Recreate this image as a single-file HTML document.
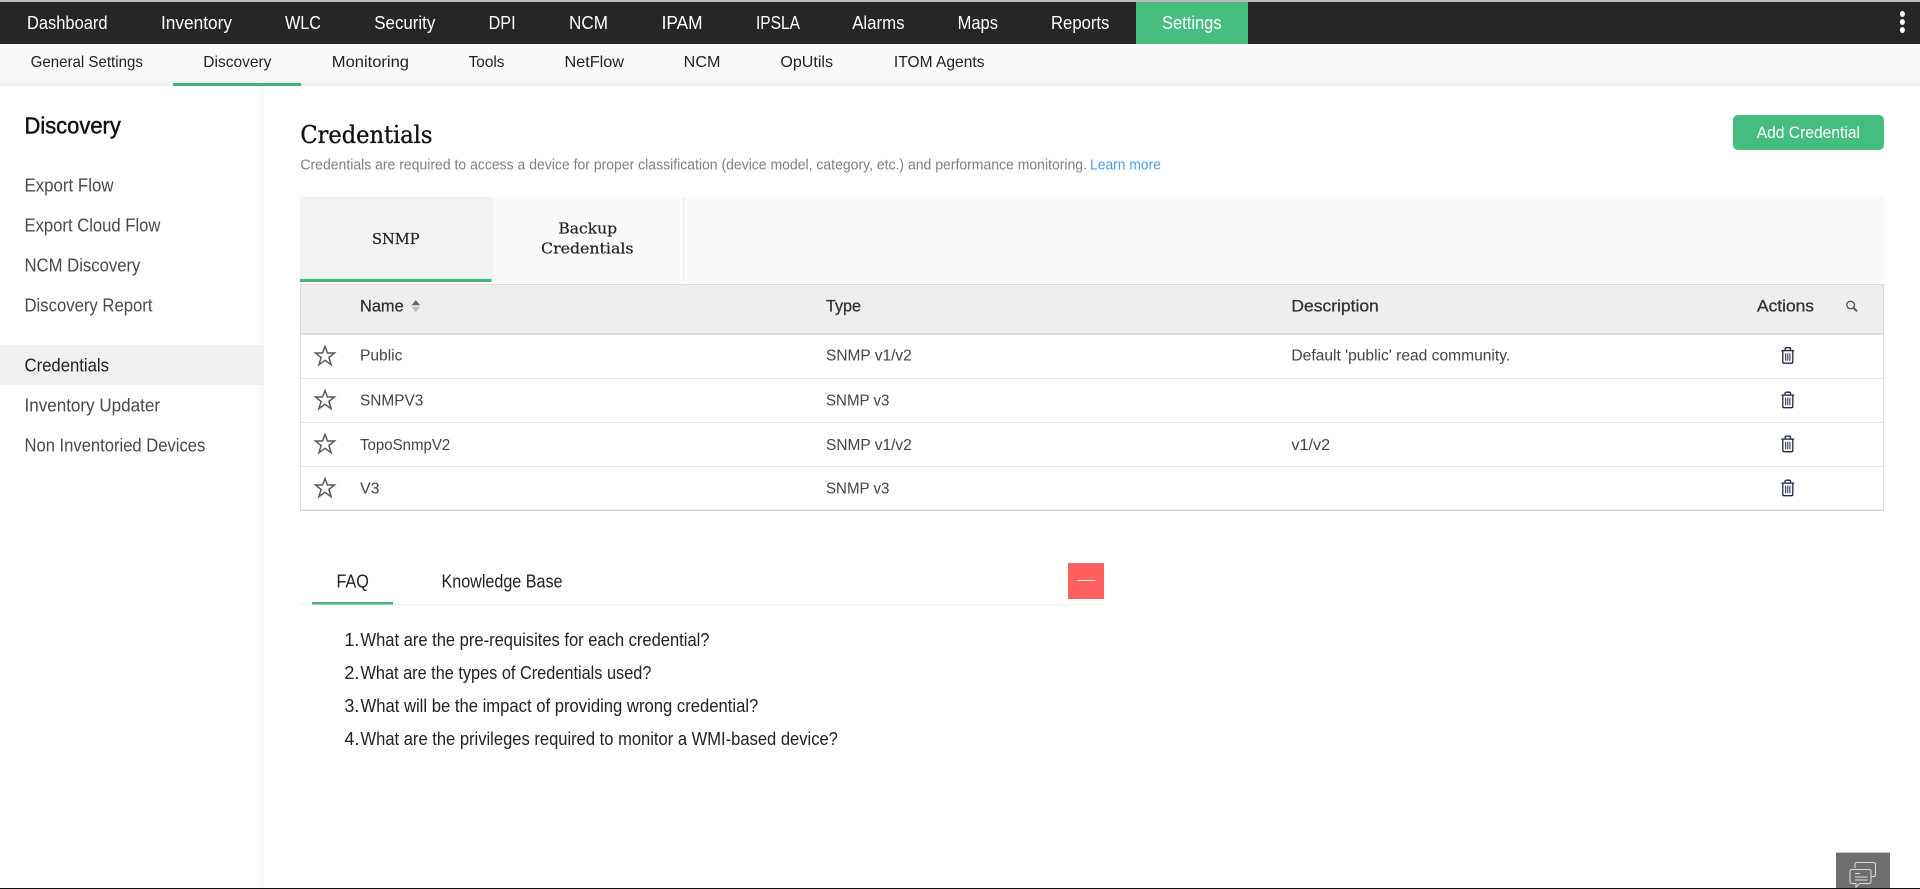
<!DOCTYPE html>
<html lang="en">
<head>
<meta charset="utf-8">
<title>Credentials</title>
<style>
html,body{margin:0;padding:0;background:#fff;width:1920px;height:889px;overflow:hidden}
svg{display:block}
text{font-family:"Liberation Sans",sans-serif;font-kerning:normal}
.nav{font-size:18px;fill:#fff}
.sub{font-size:16px;fill:#222}
.side{font-size:18px;fill:#4a4a4a}
.serif{font-family:"DejaVu Serif","Liberation Serif",serif;fill:#222;stroke:#222;stroke-width:.2}
.th{font-size:17px;fill:#333;stroke:#333;stroke-width:.3}
.td{font-size:15.5px;fill:#444}
.faq{font-size:18px;fill:#222}
</style>
</head>
<body>
<svg width="1920" height="889" viewBox="0 0 1920 889" xmlns="http://www.w3.org/2000/svg">
<defs>
<linearGradient id="subg" x1="0" y1="0" x2="0" y2="1"><stop offset="0" stop-color="#fafafa"/><stop offset=".8" stop-color="#fafafa"/><stop offset="1" stop-color="#f1f1f1"/></linearGradient>
<linearGradient id="sideg" x1="0" y1="0" x2="1" y2="0"><stop offset="0" stop-color="#fff"/><stop offset="1" stop-color="#f7f7f7"/></linearGradient>
<g id="star"><path d="M10.5 1.5 13 8h7l-5.6 4.4 2.2 7.3-6.1-4.4-6.1 4.4 2.2-7.3L1 8h7z" fill="none" stroke="#5a5a5a" stroke-width="1.5" stroke-linejoin="miter"/></g>
<g id="trash" fill="none" stroke="#1f2745" stroke-width="1.3"><path d="M.6 3.6h12.8"/><path d="M4.3 3.4V1.9q0-1.2 1.2-1.2h3q1.2 0 1.2 1.2v1.5"/><path d="M2 3.8V15q0 1.2 1.2 1.2h7.6Q12 16.2 12 15V3.8"/><path d="M4.9 6.2v7.6M7 6.2v7.6M9.1 6.2v7.6" stroke-width="1"/></g>
</defs>

<!-- top strip and nav -->
<rect x="0" y="0" width="1920" height="2" fill="#bcbcbc"/>
<rect x="0" y="2" width="1920" height="42" fill="#262626"/>
<rect x="1136" y="2" width="112" height="42" fill="#48bd80"/>
<text class="nav" x="27" y="29" textLength="80.5" lengthAdjust="spacingAndGlyphs">Dashboard</text>
<text class="nav" x="161" y="29" textLength="71" lengthAdjust="spacingAndGlyphs">Inventory</text>
<text class="nav" x="285" y="29" textLength="36" lengthAdjust="spacingAndGlyphs">WLC</text>
<text class="nav" x="374.3" y="29" textLength="61" lengthAdjust="spacingAndGlyphs">Security</text>
<text class="nav" x="488.6" y="29" textLength="27" lengthAdjust="spacingAndGlyphs">DPI</text>
<text class="nav" x="569" y="29" textLength="39" lengthAdjust="spacingAndGlyphs">NCM</text>
<text class="nav" x="661.6" y="29" textLength="41" lengthAdjust="spacingAndGlyphs">IPAM</text>
<text class="nav" x="756" y="29" textLength="44" lengthAdjust="spacingAndGlyphs">IPSLA</text>
<text class="nav" x="852.2" y="29" textLength="52.3" lengthAdjust="spacingAndGlyphs">Alarms</text>
<text class="nav" x="957.6" y="29" textLength="40.4" lengthAdjust="spacingAndGlyphs">Maps</text>
<text class="nav" x="1051" y="29" textLength="58.4" lengthAdjust="spacingAndGlyphs">Reports</text>
<text class="nav" x="1162" y="29" textLength="59.6" lengthAdjust="spacingAndGlyphs">Settings</text>
<ellipse cx="1902.4" cy="14" rx="2.5" ry="3" fill="#fff"/>
<ellipse cx="1902.4" cy="22" rx="2.5" ry="3" fill="#fff"/>
<ellipse cx="1902.4" cy="30" rx="2.5" ry="3" fill="#fff"/>

<!-- sub nav -->
<rect x="0" y="44" width="1920" height="42" fill="url(#subg)"/>
<text class="sub" x="30.6" y="67" textLength="112.3" lengthAdjust="spacingAndGlyphs">General Settings</text>
<text class="sub" x="203.3" y="67" textLength="68.1" lengthAdjust="spacingAndGlyphs">Discovery</text>
<text class="sub" x="331.8" y="67" textLength="77.2" lengthAdjust="spacingAndGlyphs">Monitoring</text>
<text class="sub" x="468.6" y="67" textLength="35.9" lengthAdjust="spacingAndGlyphs">Tools</text>
<text class="sub" x="564.5" y="67" textLength="59.5" lengthAdjust="spacingAndGlyphs">NetFlow</text>
<text class="sub" x="683.7" y="67" textLength="36.7" lengthAdjust="spacingAndGlyphs">NCM</text>
<text class="sub" x="780.4" y="67" textLength="52.6" lengthAdjust="spacingAndGlyphs">OpUtils</text>
<text class="sub" x="893.9" y="67" textLength="90.6" lengthAdjust="spacingAndGlyphs">ITOM Agents</text>
<rect x="173" y="83" width="128" height="3" fill="#3fb57a"/>

<!-- sidebar -->
<rect x="256" y="86" width="8" height="803" fill="url(#sideg)"/>
<text x="24.5" y="133.5" font-size="23" fill="#111" stroke="#111" stroke-width=".45" textLength="96.3" lengthAdjust="spacingAndGlyphs">Discovery</text>
<text class="side" x="24.5" y="191.5" textLength="89" lengthAdjust="spacingAndGlyphs">Export Flow</text>
<text class="side" x="24.5" y="231.5" textLength="135.9" lengthAdjust="spacingAndGlyphs">Export Cloud Flow</text>
<text class="side" x="24.5" y="271.5" textLength="115.9" lengthAdjust="spacingAndGlyphs">NCM Discovery</text>
<text class="side" x="24.5" y="311.5" textLength="128" lengthAdjust="spacingAndGlyphs">Discovery Report</text>
<rect x="0" y="345" width="264" height="40" fill="#f0f0f2"/>
<text class="side" x="24.5" y="371.5" textLength="84.5" lengthAdjust="spacingAndGlyphs" style="fill:#222">Credentials</text>
<text class="side" x="24.5" y="411.5" textLength="135.5" lengthAdjust="spacingAndGlyphs">Inventory Updater</text>
<text class="side" x="24.5" y="451.5" textLength="180.8" lengthAdjust="spacingAndGlyphs">Non Inventoried Devices</text>

<!-- header -->
<text class="serif" x="300.4" y="143" font-size="24" style="fill:#111;stroke:#111;stroke-width:.35" textLength="132" lengthAdjust="spacingAndGlyphs">Credentials</text>
<text x="300.4" y="169.7" font-size="14.5" fill="#808080" textLength="786.6" lengthAdjust="spacingAndGlyphs">Credentials are required to access a device for proper classification (device model, category, etc.) and performance monitoring.</text>
<text x="1090" y="169.7" font-size="14.5" fill="#4a9fe3" textLength="71" lengthAdjust="spacingAndGlyphs">Learn more</text>
<rect x="1733" y="115" width="151" height="35" rx="5" fill="#45bd80"/>
<text x="1756.7" y="138" font-size="16.5" fill="#fff" textLength="103.3" lengthAdjust="spacingAndGlyphs">Add Credential</text>

<!-- tabs -->
<rect x="300" y="197" width="1584" height="85" fill="#fafafa"/>
<rect x="300" y="197" width="192.5" height="82" fill="#f2f2f2"/>
<rect x="300" y="279" width="191.5" height="3" fill="#3fb57a"/>
<rect x="683" y="197" width="1" height="85" fill="#eaeaea"/>
<text class="serif" x="372" y="243.8" font-size="15" textLength="47.6" lengthAdjust="spacingAndGlyphs">SNMP</text>
<text class="serif" x="558.4" y="233.5" font-size="15" textLength="58.6" lengthAdjust="spacingAndGlyphs">Backup</text>
<text class="serif" x="541" y="253.5" font-size="15" textLength="92.5" lengthAdjust="spacingAndGlyphs">Credentials</text>

<!-- table -->
<rect x="300" y="284" width="1584" height="50" fill="#eeeeee"/>
<rect x="300.5" y="284.5" width="1583" height="225.5" fill="none" stroke="#dcdcdc" stroke-width="1"/>
<rect x="300" y="333" width="1584" height="2" fill="#dcdcdc"/>
<rect x="300" y="378" width="1584" height="1" fill="#e3e3e3"/>
<rect x="300" y="422" width="1584" height="1" fill="#e3e3e3"/>
<rect x="300" y="466" width="1584" height="1" fill="#e3e3e3"/>
<rect x="300" y="510" width="1584" height="1" fill="#d6d6d6"/>
<text class="th" x="360" y="311.5" textLength="43.7" lengthAdjust="spacingAndGlyphs">Name</text>
<path d="M411.6 305.3 415.8 300 420 305.3z" fill="#666"/>
<path d="M411.6 307 415.8 312.3 420 307z" fill="#bbb"/>
<text class="th" x="826" y="311.5" textLength="35" lengthAdjust="spacingAndGlyphs">Type</text>
<text class="th" x="1291.4" y="311.5" textLength="87.4" lengthAdjust="spacingAndGlyphs">Description</text>
<text class="th" x="1757" y="311.5" textLength="57" lengthAdjust="spacingAndGlyphs">Actions</text>
<circle cx="1850.6" cy="305" r="3.8" fill="none" stroke="#444" stroke-width="1.2"/>
<path d="M1853.4 307.8 1857 311.2" stroke="#444" stroke-width="1.7" fill="none"/>

<use href="#star" x="314.5" y="345"/>
<use href="#star" x="314.5" y="389"/>
<use href="#star" x="314.5" y="433"/>
<use href="#star" x="314.5" y="477"/>

<text class="td" x="360" y="360.5" textLength="42.4" lengthAdjust="spacingAndGlyphs">Public</text>
<text class="td" x="826" y="360.5" textLength="85.8" lengthAdjust="spacingAndGlyphs">SNMP v1/v2</text>
<text class="td" x="1291.4" y="360.5" textLength="218.8" lengthAdjust="spacingAndGlyphs">Default 'public' read community.</text>
<text class="td" x="360" y="405.5" textLength="63.3" lengthAdjust="spacingAndGlyphs">SNMPV3</text>
<text class="td" x="826" y="405.5" textLength="63.4" lengthAdjust="spacingAndGlyphs">SNMP v3</text>
<text class="td" x="360" y="450" textLength="90.2" lengthAdjust="spacingAndGlyphs">TopoSnmpV2</text>
<text class="td" x="826" y="450" textLength="85.8" lengthAdjust="spacingAndGlyphs">SNMP v1/v2</text>
<text class="td" x="1291.4" y="450" textLength="38.8" lengthAdjust="spacingAndGlyphs">v1/v2</text>
<text class="td" x="360" y="493.5" textLength="19.6" lengthAdjust="spacingAndGlyphs">V3</text>
<text class="td" x="826" y="493.5" textLength="63.4" lengthAdjust="spacingAndGlyphs">SNMP v3</text>

<use href="#trash" x="1780.8" y="347"/>
<use href="#trash" x="1780.8" y="391.5"/>
<use href="#trash" x="1780.8" y="435.5"/>
<use href="#trash" x="1780.8" y="479.5"/>

<!-- FAQ -->
<text x="336.5" y="587.5" font-size="18" fill="#222" textLength="32.4" lengthAdjust="spacingAndGlyphs">FAQ</text>
<text x="441.5" y="587.5" font-size="18" fill="#222" textLength="121" lengthAdjust="spacingAndGlyphs">Knowledge Base</text>
<rect x="300" y="604" width="804" height="1" fill="#eeeeee"/>
<rect x="312" y="602" width="81" height="2.5" fill="#3fb57a"/>
<rect x="1068" y="563" width="36" height="36" fill="#ff5f5f"/>
<rect x="1077" y="580" width="18.5" height="1" fill="#fff"/>
<text class="faq" x="344.4" y="646">1.</text>
<text class="faq" x="360.5" y="646" textLength="349" lengthAdjust="spacingAndGlyphs">What are the pre-requisites for each credential?</text>
<text class="faq" x="344.4" y="679">2.</text>
<text class="faq" x="360.5" y="679" textLength="290.9" lengthAdjust="spacingAndGlyphs">What are the types of Credentials used?</text>
<text class="faq" x="344.4" y="712">3.</text>
<text class="faq" x="360.5" y="712" textLength="397.8" lengthAdjust="spacingAndGlyphs">What will be the impact of providing wrong credential?</text>
<text class="faq" x="344.4" y="745">4.</text>
<text class="faq" x="360.5" y="745" textLength="477.4" lengthAdjust="spacingAndGlyphs">What are the privileges required to monitor a WMI-based device?</text>

<!-- chat widget -->
<rect x="1836" y="852" width="54" height="37" fill="#6f6f6f"/>
<rect x="1836" y="852" width="54" height="1" fill="#c9c9c9"/>
<g fill="none" stroke="#d8d8d8" stroke-width="1">
<path d="M1855 868v-3.5q0-2 2-2h16.5q2 0 2 2v10q0 2-2 2h-2"/>
<path d="M1852 869.5h17q2 0 2 2v10q0 2-2 2h-9.5l-3.5 3.5v-3.5h-4q-2 0-2-2v-10q0-2 2-2z" fill="#6f6f6f"/>
<path d="M1855 873.5h5M1855 877h12.5M1855 880h12.5"/>
</g>
<rect x="0" y="888" width="1920" height="1" fill="#111"/>
</svg>
</body>
</html>
